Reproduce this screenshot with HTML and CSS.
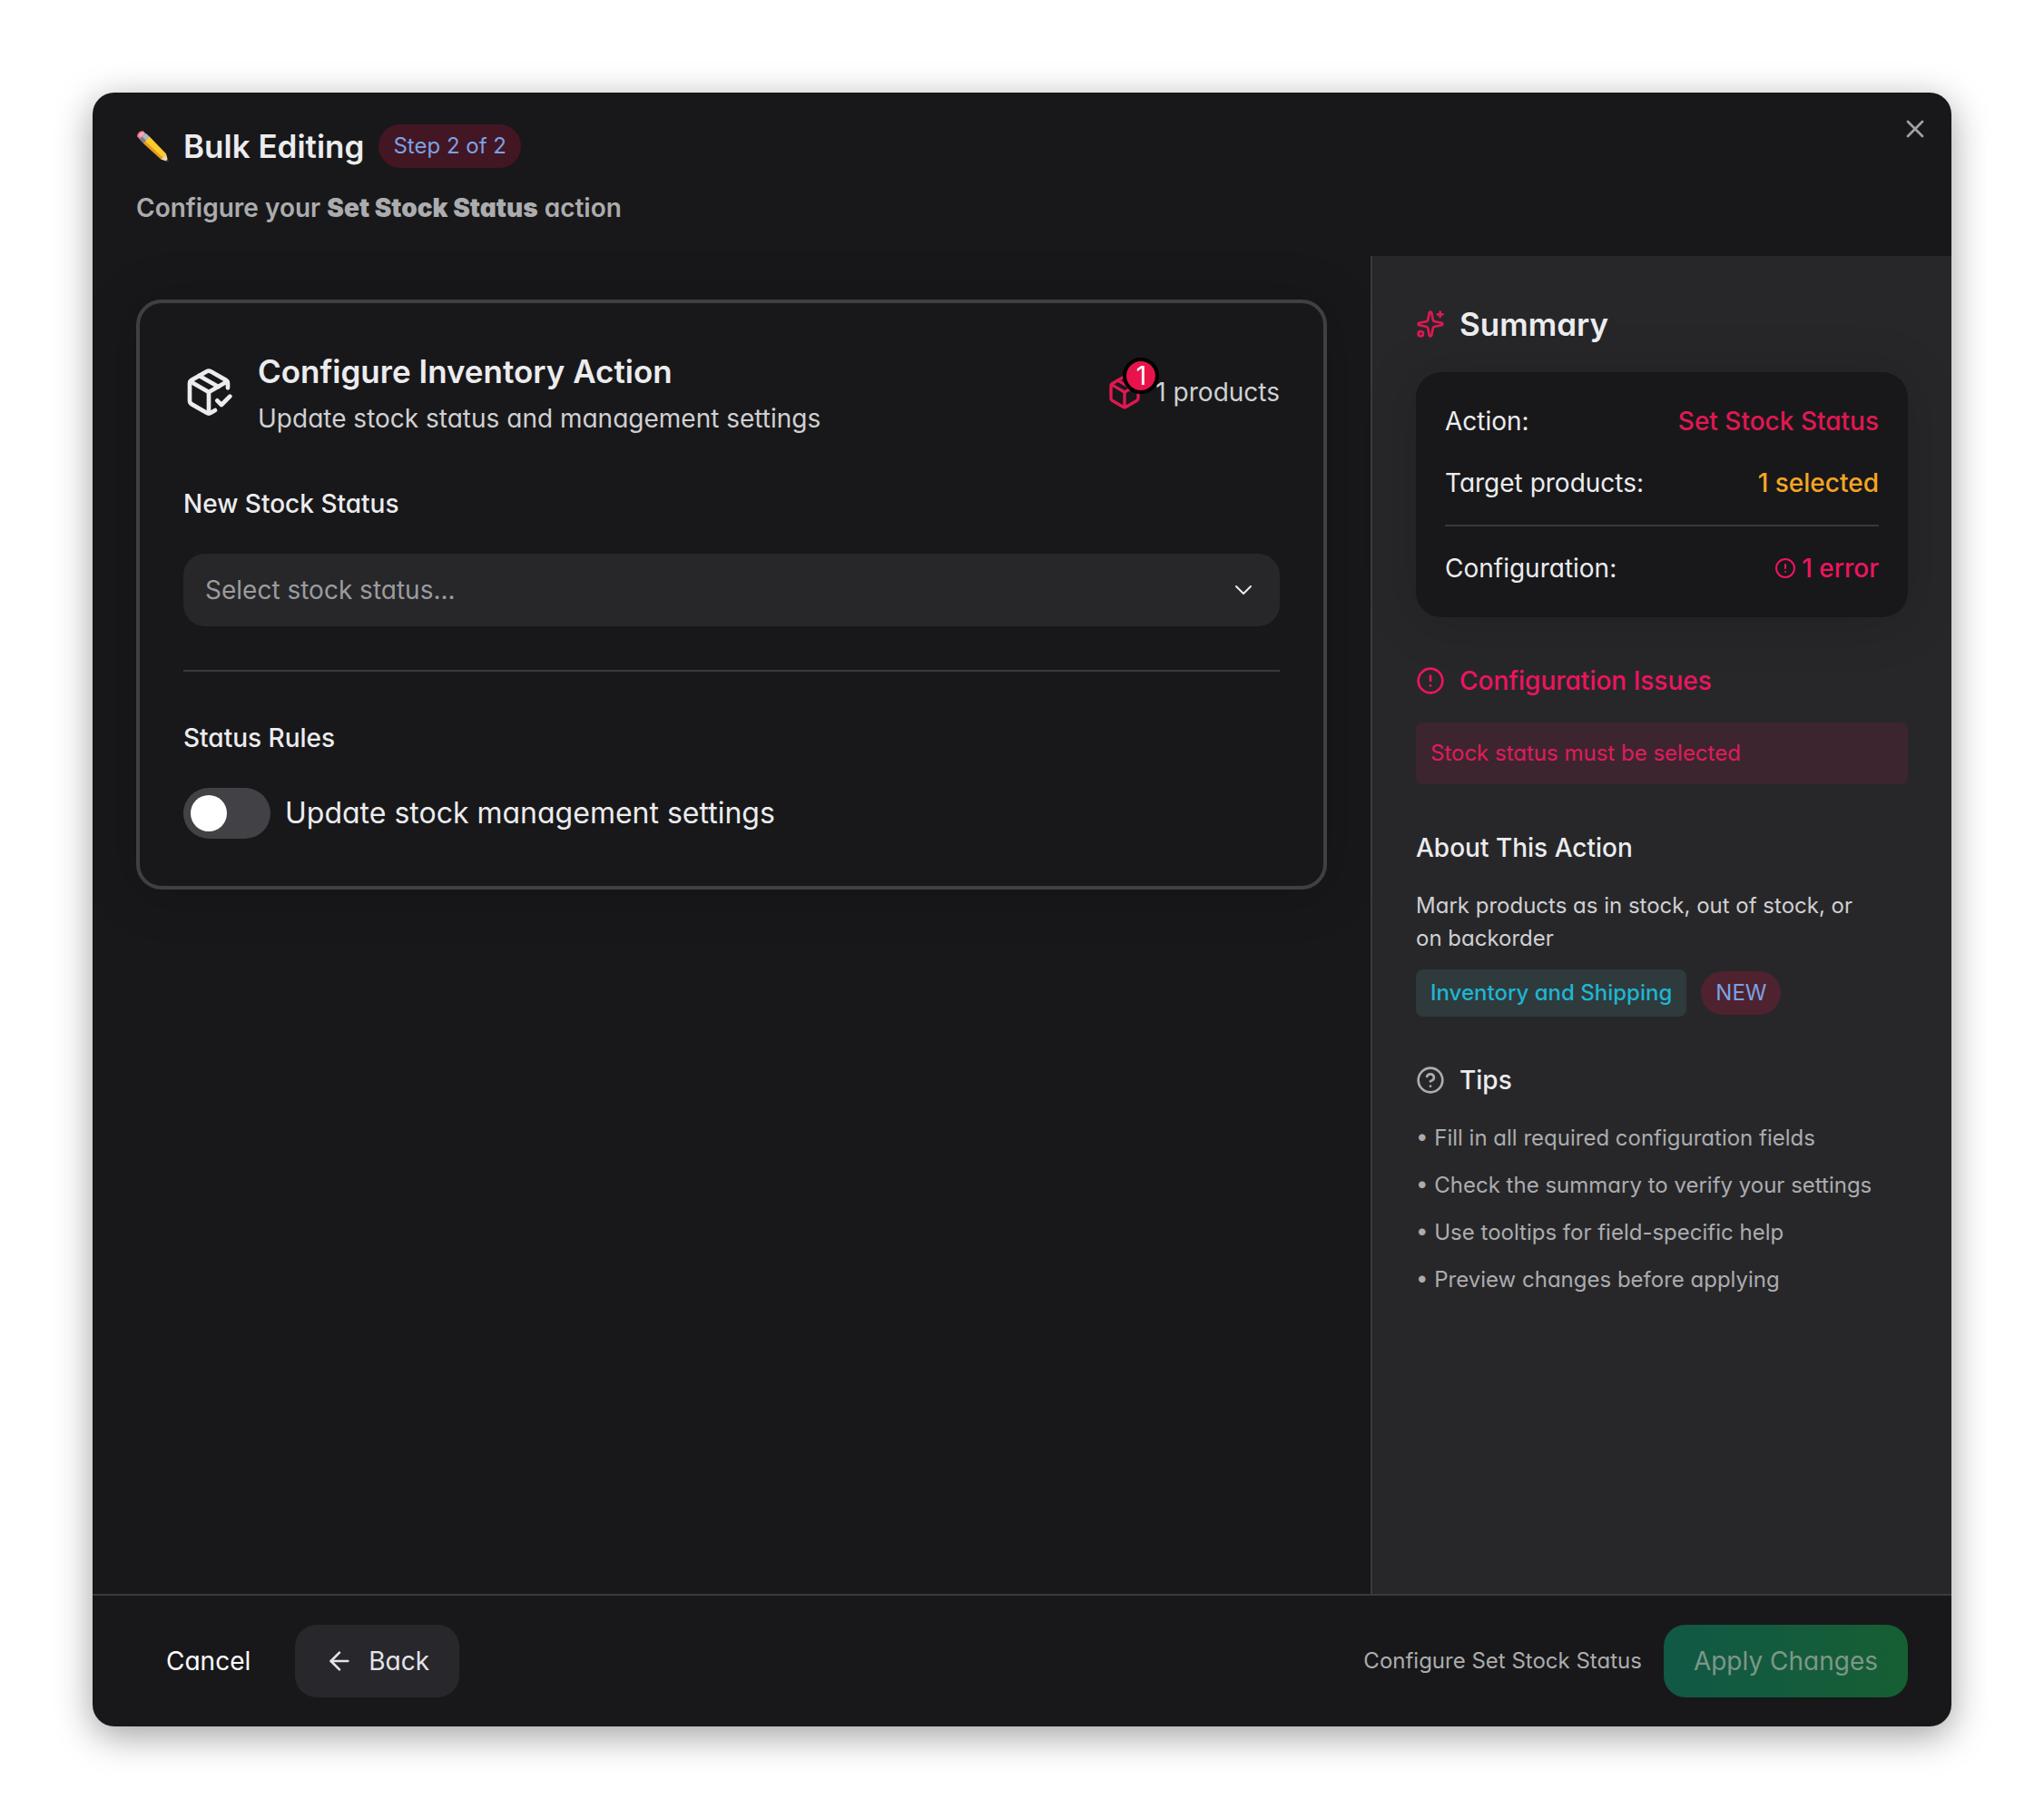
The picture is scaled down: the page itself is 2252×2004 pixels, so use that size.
FILE: index.html
```html
<!DOCTYPE html>
<html lang="en">
<head>
    <meta charset="UTF-8">
    <meta name="viewport" content="width=device-width, initial-scale=1.0">
    <title>Bulk Editing</title>
    <link rel="stylesheet" href="styles.css">
</head>
<body>
    <div class="modal" role="dialog" aria-labelledby="modal-title">
        <header class="modal-header">
            <div class="title-row">
                <h1 class="modal-title" id="modal-title">
                    <svg class="pencil" viewBox="0 0 36 36" aria-hidden="true">
                        <path fill="#e8748a" d="M1.2 7.6C.4 4.6 4 .6 7.6 1.2L11 4.4 4.2 10.8z"/>
                        <path fill="#f7a8b4" d="M3 6.4C3.4 4 5 2.4 7.4 2.2L9.8 4.4 4.8 8.6z"/>
                        <path fill="#6e8294" d="M3.8 10.8 10.8 4l4 3.8-7.2 7z"/>
                        <path fill="#a9bac6" d="M6.8 7.8 10.8 4l4 3.8-4 4z"/>
                        <path fill="#e59a1c" d="M7.6 14.8 14.8 7.8 33 26.4l-5.8 6z"/>
                        <path fill="#fdcb2e" d="M10 12.6 14.8 7.8 33 26.4l-3.8 4z"/>
                        <path fill="#f3d9a6" d="M27.2 32.4 33 26.4 35.4 35.2z"/>
                        <path fill="#3b3f45" d="M32.6 34.2 34.6 32.2 35.6 35.6z"/>
                    </svg>
                    Bulk Editing
                </h1>
                <span class="pill">Step 2 of 2</span>
            </div>
            <p class="modal-subtitle">Configure your <strong>Set Stock Status</strong> action</p>
            <button class="close-button" type="button" aria-label="Close">
                <svg class="icon" viewBox="0 0 24 24"><path d="M18 6 6 18"/><path d="m6 6 12 12"/></svg>
            </button>
        </header>

        <div class="modal-body">
            <main class="content">
                <section class="config-card">
                    <div class="config-header">
                        <svg class="icon icon-large" viewBox="0 0 24 24">
                            <path d="m16 16 2 2 4-4"/>
                            <path d="M21 10V8a2 2 0 0 0-1-1.73l-7-4a2 2 0 0 0-2 0l-7 4A2 2 0 0 0 3 8v8a2 2 0 0 0 1 1.73l7 4a2 2 0 0 0 2 0l2-1.14"/>
                            <path d="m7.5 4.27 9 5.15"/>
                            <path d="M3.29 7 12 12l8.71-5"/>
                            <path d="M12 22V12"/>
                        </svg>
                        <div class="config-heading">
                            <h2>Configure Inventory Action</h2>
                            <p>Update stock status and management settings</p>
                        </div>
                        <div class="product-count">
                            <span class="badge-wrap">
                                <svg class="icon icon-medium" viewBox="0 0 24 24">
                                    <path d="M11 21.73a2 2 0 0 0 2 0l7-4A2 2 0 0 0 21 16V8a2 2 0 0 0-1-1.73l-7-4a2 2 0 0 0-2 0l-7 4A2 2 0 0 0 3 8v8a2 2 0 0 0 1 1.73z"/>
                                    <path d="M12 22V12"/>
                                    <path d="M3.29 7 12 12l8.71-5"/>
                                    <path d="m7.5 4.27 9 5.15"/>
                                </svg>
                                <span class="badge">1</span>
                            </span>
                            1 products
                        </div>
                    </div>

                    <label class="field-label" for="stock-status">New Stock Status</label>
                    <div class="select-wrap">
                        <select class="select" id="stock-status">
                            <option value="">Select stock status...</option>
                        </select>
                        <svg class="icon thin chevron" viewBox="0 0 24 24"><path d="m6 9 6 6 6-6"/></svg>
                    </div>

                    <hr class="divider">

                    <h3 class="field-label">Status Rules</h3>
                    <div class="switch-row">
                        <input class="switch" type="checkbox" role="switch" id="update-settings">
                        <label for="update-settings">Update stock management settings</label>
                    </div>
                </section>
            </main>

            <aside class="sidebar">
                <h2 class="side-title large">
                    <svg class="icon primary" viewBox="0 0 24 24">
                        <path d="M11.017 2.814a1 1 0 0 1 1.966 0l1.051 5.558a2 2 0 0 0 1.594 1.594l5.558 1.051a1 1 0 0 1 0 1.966l-5.558 1.051a2 2 0 0 0-1.594 1.594l-1.051 5.558a1 1 0 0 1-1.966 0l-1.051-5.558a2 2 0 0 0-1.594-1.594l-5.558-1.051a1 1 0 0 1 0-1.966l5.558-1.051a2 2 0 0 0 1.594-1.594z"/>
                        <path d="M20 2v4"/>
                        <path d="M22 4h-4"/>
                        <circle cx="4" cy="20" r="2"/>
                    </svg>
                    Summary
                </h2>
                <div class="summary-card">
                    <div class="summary-row">
                        <span>Action:</span>
                        <span class="value primary">Set Stock Status</span>
                    </div>
                    <div class="summary-row">
                        <span>Target products:</span>
                        <span class="value warning">1 selected</span>
                    </div>
                    <hr class="summary-divider">
                    <div class="summary-row">
                        <span>Configuration:</span>
                        <span class="value danger">
                            <svg class="icon icon-small" viewBox="0 0 24 24"><circle cx="12" cy="12" r="10"/><path d="M12 8v4"/><path d="M12 16h.01"/></svg>
                            1 error
                        </span>
                    </div>
                </div>

                <section class="side-section">
                    <h3 class="side-title danger">
                        <svg class="icon" viewBox="0 0 24 24"><circle cx="12" cy="12" r="10"/><path d="M12 8v4"/><path d="M12 16h.01"/></svg>
                        Configuration Issues
                    </h3>
                    <p class="issue">Stock status must be selected</p>
                </section>

                <section class="side-section">
                    <h3 class="side-title">About This Action</h3>
                    <p class="about">Mark products as in stock, out of stock, or on backorder</p>
                    <div class="tags">
                        <span class="tag">Inventory and Shipping</span>
                        <span class="pill">NEW</span>
                    </div>
                </section>

                <section class="side-section">
                    <h3 class="side-title">
                        <svg class="icon muted" viewBox="0 0 24 24"><circle cx="12" cy="12" r="10"/><path d="M9.09 9a3 3 0 0 1 5.83 1c0 2-3 3-3 3"/><path d="M12 17h.01"/></svg>
                        Tips
                    </h3>
                    <ul class="tips">
                        <li>• Fill in all required configuration fields</li>
                        <li>• Check the summary to verify your settings</li>
                        <li>• Use tooltips for field-specific help</li>
                        <li>• Preview changes before applying</li>
                    </ul>
                </section>
            </aside>
        </div>

        <footer class="modal-footer">
            <button class="button ghost" type="button">Cancel</button>
            <button class="button flat" type="button">
                <svg class="icon" viewBox="0 0 24 24"><path d="m12 19-7-7 7-7"/><path d="M19 12H5"/></svg>
                Back
            </button>
            <span class="footer-note">Configure Set Stock Status</span>
            <button class="button apply" type="button" disabled>Apply Changes</button>
        </footer>
    </div>
</body>
</html>
```
FILE: styles.css
```css
:root {
    --bg: #18181a;
    --bg-raised: #27272a;
    --line: #3a3a3d;
    --text: #ececee;
    --text-soft: #d0d0d2;
    --text-muted: #acacae;
    --primary: #e01852;
    --danger: #ee145e;
    --warning: #f5a524;
    --radius: 28px;
    --radius-md: 24px;
    --radius-sm: 8px;
}

* {
    margin: 0;
    padding: 0;
    box-sizing: border-box;
    font-family: 'Inter', sans-serif;
}

body {
    min-height: 100vh;
    padding: 102px;
    display: flex;
    background-color: #fff;
    color: var(--text);
    font-size: 28px;
    line-height: 42px;
    font-feature-settings: "cv11";
}

button,
select {
    font: inherit;
    font-feature-settings: inherit;
}

hr {
    border: none;
    height: 2px;
    background-color: var(--line);
}

.modal {
    flex: 1;
    min-width: 0;
    display: flex;
    flex-direction: column;
    background-color: var(--bg);
    border-radius: var(--radius-md);
    box-shadow: 0 10px 40px rgba(0, 0, 0, 0.38);
    overflow: hidden;
}

/* Icons */
.icon {
    width: 32px;
    height: 32px;
    flex-shrink: 0;
    fill: none;
    stroke: currentColor;
    stroke-width: 2;
    stroke-linecap: round;
    stroke-linejoin: round;
}

.icon.thin {
    stroke-width: 1.5;
}

.icon-small {
    width: 24px;
    height: 24px;
}

.icon-medium {
    width: 40px;
    height: 40px;
}

.icon-large {
    width: 56px;
    height: 56px;
}

.primary {
    color: var(--primary);
}

.danger {
    color: var(--danger);
}

.warning {
    color: var(--warning);
}

.muted {
    color: var(--text-muted);
}

/* Header */
.modal-header {
    position: relative;
    padding: 32px 48px;
    display: flex;
    flex-direction: column;
    gap: 20px;
}

.title-row {
    display: flex;
    align-items: center;
    gap: 16px;
}

.modal-title {
    display: flex;
    align-items: center;
    gap: 16px;
    font-size: 35px;
    line-height: 54px;
    font-weight: 600;
}

.pencil {
    width: 36px;
    height: 36px;
}

.pill {
    padding: 0 16px;
    border-radius: 24px;
    background-color: rgba(225, 18, 72, 0.22);
    color: #7aa2e3;
    font-size: 24px;
    line-height: 48px;
}

.modal-subtitle {
    color: var(--text-muted);
    font-weight: 600;
}

.modal-subtitle strong {
    font-weight: 900;
}

.close-button {
    position: absolute;
    top: 16px;
    right: 16px;
    padding: 8px;
    display: flex;
    border: none;
    background: none;
    color: #a1a1aa;
    cursor: pointer;
}

/* Body */
.modal-body {
    flex: 1;
    display: grid;
    grid-template-columns: minmax(0, 1fr) 640px;
}

.content {
    padding: 48px;
}

.config-card {
    padding: 48px 48px 52px;
    border: 4px solid #404043;
    border-radius: var(--radius);
    box-shadow: 0 4px 60px rgba(0, 0, 0, 0.2);
}

.config-header {
    display: flex;
    align-items: center;
    gap: 26px;
    margin-bottom: 52px;
}

.config-heading {
    flex: 1;
}

.config-heading h2 {
    margin-bottom: 4px;
    font-size: 35px;
    line-height: 54px;
    font-weight: 600;
}

.config-heading p {
    color: var(--text-soft);
}

.product-count {
    display: flex;
    align-items: center;
    gap: 14px;
    color: var(--text-soft);
}

.badge-wrap {
    position: relative;
    display: flex;
    color: var(--primary);
}

.badge {
    position: absolute;
    top: -18px;
    right: -18px;
    width: 40px;
    height: 40px;
    border: 4px solid #000;
    border-radius: 50%;
    background-color: #e8134b;
    color: #fff;
    line-height: 32px;
    text-align: center;
}

.field-label {
    display: block;
    margin-bottom: 34px;
    font-size: 28px;
    font-weight: 500;
}

.select-wrap {
    position: relative;
}

.select {
    width: 100%;
    height: 80px;
    padding: 0 80px 0 24px;
    display: block;
    border: none;
    border-radius: var(--radius-md);
    background-color: var(--bg-raised);
    color: #9b9b9e;
    appearance: none;
    outline: none;
}

.chevron {
    position: absolute;
    top: 24px;
    right: 24px;
    pointer-events: none;
}

.divider {
    margin: 48px 0 52px;
}

.switch-row {
    display: flex;
    align-items: center;
    gap: 16px;
    font-size: 32px;
}

.switch {
    width: 96px;
    height: 56px;
    padding: 8px;
    border-radius: 28px;
    background-color: #424146;
    appearance: none;
    cursor: pointer;
}

.switch::before {
    content: "";
    display: block;
    width: 40px;
    height: 40px;
    border-radius: 50%;
    background-color: #fff;
}

.switch:checked {
    background-color: var(--primary);
}

.switch:checked::before {
    margin-left: auto;
}

/* Sidebar */
.sidebar {
    padding: 48px;
    border-left: 2px solid var(--line);
    background-color: var(--bg-raised);
}

.side-title {
    display: flex;
    align-items: center;
    gap: 16px;
    font-size: 28px;
    font-weight: 500;
}

.side-title.large {
    margin-bottom: 26px;
    font-size: 35px;
    line-height: 54px;
    font-weight: 600;
}

.summary-card {
    padding: 32px;
    display: flex;
    flex-direction: column;
    gap: 24px;
    border-radius: var(--radius);
    background-color: var(--bg);
    box-shadow: 0 4px 60px rgba(0, 0, 0, 0.16);
}

.summary-row {
    display: flex;
    justify-content: space-between;
    line-height: 44px;
}

.value {
    display: flex;
    align-items: center;
    gap: 6px;
    font-weight: 500;
}

.side-section {
    margin-top: 49px;
}

.issue {
    margin-top: 25px;
    padding: 16px;
    border-radius: var(--radius-sm);
    background-color: #3d252f;
    color: #e01c5c;
    font-size: 24px;
    line-height: 36px;
}

.about {
    margin: 25px 0 16px;
    padding-right: 32px;
    color: var(--text-soft);
    font-size: 24px;
    line-height: 36px;
}

.tags {
    display: flex;
    align-items: center;
    gap: 16px;
}

.tag {
    padding: 8px 16px;
    border-radius: var(--radius-sm);
    background-color: #2f3a3d;
    color: #1fb5d0;
    font-size: 24px;
    line-height: 36px;
    font-weight: 500;
}

.tips {
    margin-top: 25px;
    display: flex;
    flex-direction: column;
    gap: 16px;
    list-style: none;
    color: var(--text-muted);
    font-size: 24px;
    line-height: 36px;
}

/* Footer */
.modal-footer {
    padding: 32px 48px;
    display: flex;
    align-items: center;
    gap: 16px;
    border-top: 2px solid var(--line);
}

.button {
    height: 80px;
    padding: 0 33px;
    display: flex;
    align-items: center;
    gap: 16px;
    border: none;
    border-radius: var(--radius-md);
    cursor: pointer;
}

.button.ghost {
    background: none;
    color: #fff;
}

.button.flat {
    background-color: #28272c;
    color: #e4e4e7;
}

.button.apply {
    margin-left: 8px;
    background-image: linear-gradient(to right, #115846, #165f33);
    color: #7d9789;
    cursor: default;
}

.footer-note {
    margin-left: auto;
    color: var(--text-muted);
    font-size: 24px;
}

@media (max-width: 1400px) {
    body {
        padding: 24px;
    }

    .modal-body {
        grid-template-columns: minmax(0, 1fr);
    }

    .sidebar {
        border-left: none;
        border-top: 2px solid var(--line);
    }
}
```
